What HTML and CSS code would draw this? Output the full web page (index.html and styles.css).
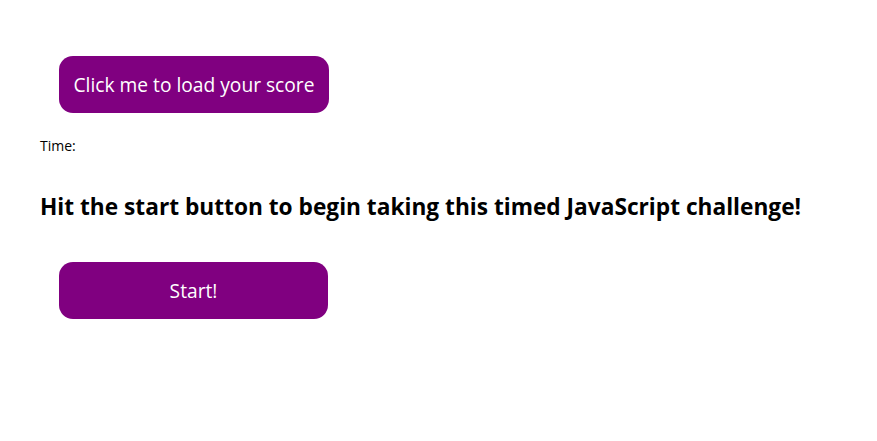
FILE: index.html
```html
<!DOCTYPE html>
<html>
<head>
<meta charset="utf-8">
<link rel="stylesheet" href="styles.css">
</head>
<body>
<div class="page">
  <button class="btn btn-score">Click me to load your score</button>
  <p class="time">Time:</p>
  <h2 class="title">Hit the start button to begin taking this timed JavaScript challenge!</h2>
  <button class="btn btn-start">Start!</button>
</div>
</body>
</html>
```
FILE: styles.css
```css
html, body {
  margin: 0;
  padding: 0;
  background: #fff;
}
.page {
  display: flex;
  flex-direction: column;
  align-items: flex-start;
  padding: 56px 0 0 40px;
  font-family: "Open Sans", "Noto Sans", sans-serif;
  color: #000;
}
.btn {
  margin-left: 19px;
  width: 270px;
  height: 57px;
  border: none;
  border-radius: 14px;
  background: #800080;
  color: #fff;
  font-family: "Open Sans", sans-serif;
  font-size: 19.2px;
  padding: 0;
}
.time {
  margin: 24px 0 0 0;
  font-size: 14px;
  line-height: 18px;
}
.title {
  margin: 37px 0 0 0;
  font-size: 22.7px;
  font-weight: bold;
  line-height: 30px;
}
.btn-start {
  margin-top: 40px;
  width: 269px;
}
```
